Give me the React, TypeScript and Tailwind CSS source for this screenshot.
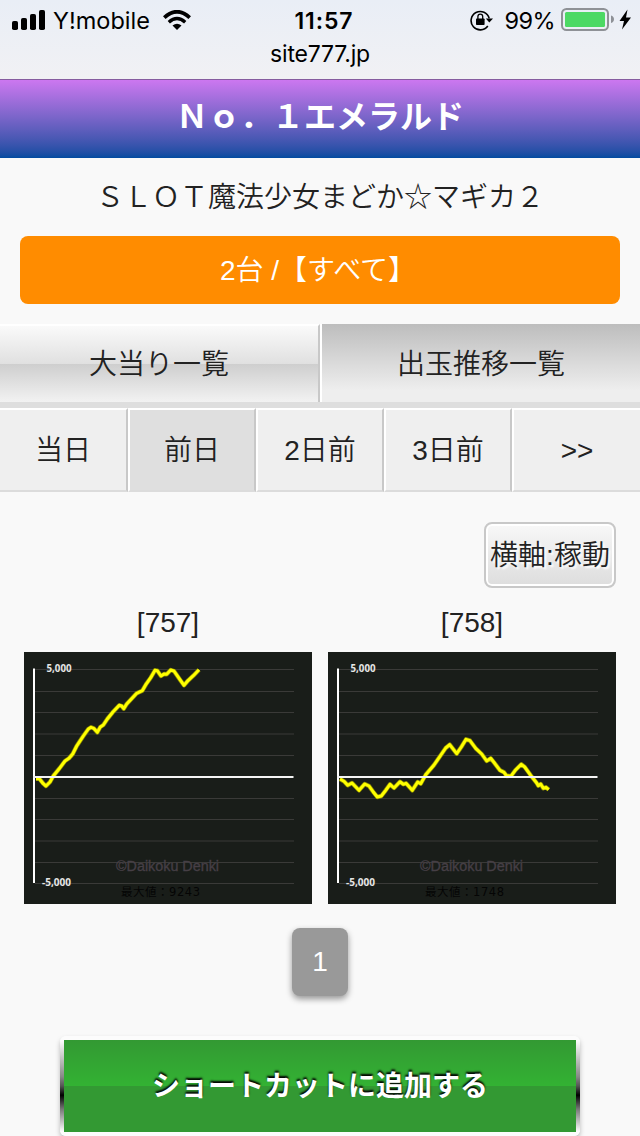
import React, { useState } from 'react';

const dayTabs = ['当日', '前日', '2日前', '3日前', '>>'];

const gridLines = [17.5, 39.5, 60.5, 82, 103.5, 146.5, 167.5, 189, 210.5, 231.5];

const machines = [
  {
    id: 757,
    max: 9243,
    points:
      '12,126.7 15.3,126.7 19.3,131.7 22,134 26,130 29.3,124 36,115.7 41,109 45,106.3 48.7,102 52.7,94 59.3,84 64.3,77 67,75.3 69.7,76.3 73.3,80.3 76.3,75 79.3,73 83.3,67 88.7,60.3 95.3,53.3 97.7,54 99.7,56.7 102.7,52 112.7,41.3 118.3,38.7 122,32.3 126.7,25.7 131,18.3 133.3,18.7 137,24 140,22 142.7,22.3 146.7,18 150,19 156,27.7 160,33.3 164.3,28.3 169.3,23.7 175,17.7',
  },
  {
    id: 758,
    max: 1748,
    points:
      '12,127 16,129.3 19.7,133.3 24,131 31,138.3 36.7,132 41,134 45.3,140 49.3,145 53.3,144 57.7,138.3 62,132.3 66,136 72,129.7 75.3,132.3 78,131.3 84.3,138.3 89.7,130 92.7,131.7 97.7,122.7 106,113 117.7,96 121.7,92.7 128.7,101.7 133.3,95 138,87.3 142,88.7 147.7,96.3 153.7,102 158.7,109 162.7,106.3 166.7,111.3 172,118.3 176,120.3 178.7,124 183.3,123.7 187.3,118.3 193.3,112.3 196.7,115 202.7,123.3 208.7,131 210.3,133.7 212.7,132 215.3,136.3 218,135.3 220.7,137.7',
  },
];

const StatusBar = () => (
  <header className="h-[79px] bg-linear-to-b from-[#e9eef6] to-[#f1f1f4] font-['Inter','Noto_Sans_CJK_JP',sans-serif] text-black">
    <div className="grid h-10 grid-cols-[1fr_auto_1fr] items-center pl-3 pr-2">
      <div className="flex items-center">
        <svg className="-mt-0.5" width="33" height="20" viewBox="0 0 33 20">
          <rect x="0" y="11" width="6" height="9" rx="1.8" />
          <rect x="9" y="8" width="6" height="12" rx="1.8" />
          <rect x="18" y="4" width="6" height="16" rx="1.8" />
          <rect x="27" y="0" width="6" height="20" rx="1.8" />
        </svg>
        <span className="ml-2 w-[97px] whitespace-nowrap text-[23.5px] leading-[42px]">Y!mobile</span>
        <svg className="-mt-0.5 ml-[13px]" width="28" height="20" viewBox="0 0 28 20">
          <path d="M1.3 7.6Q14-4 26.7 7.6" fill="none" stroke="#000" strokeWidth="3.8" />
          <path d="M5.8 12.2Q14 4.8 22.2 12.2" fill="none" stroke="#000" strokeWidth="3.4" />
          <path d="M14 20 9.5 15.4Q14 12 18.5 15.4Z" />
        </svg>
      </div>
      <span className="pl-1 text-[23px] font-semibold leading-[42px] tracking-[0.9px]">11:57</span>
      <div className="flex items-center justify-end">
        <svg className="-mt-0.5" width="23" height="22" viewBox="0 0 23 22">
          <path d="M17.8 17A9.2 9.2 0 1 1 19.2 9.4" fill="none" stroke="#000" strokeWidth="1.6" />
          <path d="M15.8 9.4H23L19.3 13.5Z" />
          <rect x="6" y="9.5" width="8.6" height="6.5" rx="0.8" />
          <path d="M7.9 10V7.6a2.4 2.4 0 0 1 4.8 0V10" fill="none" stroke="#000" strokeWidth="1.3" />
        </svg>
        <span className="ml-3 text-[23.5px] leading-[42px] tracking-[-0.6px]">99%</span>
        <svg className="-mt-1 ml-[6px]" width="71" height="24" viewBox="0 0 71 24">
          <rect x="1" y="2" width="46" height="21" rx="4.5" fill="none" stroke="#8e9196" strokeWidth="2" />
          <rect x="4" y="5" width="40" height="15" rx="1.5" fill="#4cd964" />
          <path d="M50 8.5c4 1 4 6.5 0 7.5Z" fill="#8e9196" />
          <path d="M66.500 2.500 58.500 14H63L61 22.500 70 10.500H65Z" />
        </svg>
      </div>
    </div>
    <p className="-mt-px text-center text-[23px] leading-[30px] tracking-[-0.2px]">site777.jp</p>
  </header>
);

const SlumpGraph = ({ max, points }: { max: number; points: string }) => (
  <svg className="block" width="288" height="252" viewBox="0 0 288 252">
    <rect width="288" height="252" fill="#191d19" />
    {gridLines.map(y => (
      <line key={y} x1="11" x2="270" y1={y} y2={y} stroke="#3a3a38" />
    ))}
    <g fill="#e6e6e6" fontSize="10.3" fontWeight="700" fontFamily="'Open Sans', sans-serif">
      <text x="22.5" y="20" textLength="25" lengthAdjust="spacingAndGlyphs">5,000</text>
      <text x="18" y="234" textLength="29" lengthAdjust="spacingAndGlyphs">-5,000</text>
    </g>
    <text x="92" y="219" fill="#463f46" stroke="#463f46" strokeWidth="0.3" fontSize="14" textLength="103" lengthAdjust="spacingAndGlyphs" fontFamily="'Liberation Sans', sans-serif">
      ©Daikoku Denki
    </text>
    <text x="97" y="243.5" fill="#050505" fontSize="11.5" textLength="79" fontFamily="'DejaVu Sans', 'Noto Sans CJK JP', sans-serif">
      最大値：{max}
    </text>
    <polyline points={points} fill="none" stroke="#8b8b00" strokeWidth="4.4" strokeLinejoin="round" />
    <polyline points={points} fill="none" stroke="#ffff00" strokeWidth="3" strokeLinejoin="round" />
    <line x1="10" x2="10" y1="16.5" y2="231" stroke="#fff" strokeWidth="2" />
    <line x1="9" x2="269.5" y1="125" y2="125" stroke="#f4f4f4" strokeWidth="2" />
  </svg>
);

const App = () => {
  const [day, setDay] = useState(1);

  return (
    <div className="h-[1136px] w-[640px] overflow-hidden bg-[#f9f9f9] font-['Liberation_Sans','Noto_Sans_CJK_JP',sans-serif] text-[28px] text-[#222]">
      <StatusBar />
      <h1 className="h-[79px] border-t border-[#865c9f] bg-linear-to-b from-[#cc77f0] to-[#004ba0] text-center font-['Noto_Sans_CJK_JP',sans-serif] text-[32px] font-bold leading-[68px] text-white">
        Ｎｏ．１エメラルド
      </h1>
      <h2 className="h-[78px] text-center font-['Noto_Sans_CJK_JP',sans-serif] font-[350] leading-[74px]">
        ＳＬＯＴ魔法少女まどか☆マギカ２
      </h2>
      <button className="mx-5 block h-[68px] w-[600px] rounded-lg bg-[#ff8c00] pr-1 pt-0.5 font-[350] text-white">
        2台 /【すべて】
      </button>

      {/* List type */}
      <nav className="mt-5 flex h-[84px] border-b-[6px] border-[#dedede] font-[350] [text-shadow:2px_2px_2px_#fff]">
        <button className="w-80 border-r-2 border-t-2 border-r-[#c8c8c8] border-t-white bg-[linear-gradient(#fafafa,#e0e0e0_50%,#cecece_50%,#f2f2f2)] pt-0.5">
          大当り一覧
        </button>
        <button className="flex-1 border-l-2 border-white bg-[linear-gradient(#bdbdbd,#eeeeee_85%)] pt-1 [text-shadow:none]">
          出玉推移一覧
        </button>
      </nav>

      {/* Days */}
      <nav className="grid h-[84px] grid-cols-5 font-[350] [text-shadow:2px_2px_2px_#fff]">
        {dayTabs.map((label, i) => (
          <button
            key={label}
            onClick={() => setDay(i)}
            className={`border-b-2 border-l-2 border-r-2 border-t-2 border-b-[#dcdcdc] border-l-white border-r-[#c8c8c8] border-t-white pt-px first:border-l-0 last:border-r-0 ${
              day === i ? 'bg-[#dfdfdf]' : 'bg-[#efefef]'
            }`}
          >
            {label}
          </button>
        ))}
      </nav>

      <div className="flex justify-end px-6 pt-[30px]">
        <button className="h-[66px] w-[132px] whitespace-nowrap rounded-lg border-2 border-[#c8c8c8] bg-linear-to-b from-[#f8f8f8] to-[#dddddd] pt-0.5 font-[350] shadow-[inset_0_0_0_2px_#fff] [text-shadow:2px_2px_2px_#fff]">
          横軸:稼動
        </button>
      </div>

      {/* Graphs */}
      <div className="flex gap-4 px-6">
        {machines.map(m => (
          <section key={m.id}>
            <h3 className="h-16 text-center leading-[70px]">[{m.id}]</h3>
            <SlumpGraph max={m.max} points={m.points} />
          </section>
        ))}
      </div>

      <div className="flex justify-center pt-6">
        <button className="h-[68px] w-14 rounded-lg bg-[#999] text-white shadow-[0_3px_6px_rgba(0,0,0,0.4)]">1</button>
      </div>

      <div className="mx-[60px] mt-10 rounded-md border-y-4 border-[#fcfcfc] bg-[linear-gradient(#fff,#888_40%,#555_50%,#000_60%,#777_75%,#fff)] px-1 shadow-[0_3px_5px_rgba(0,0,0,0.25)]">
        <button className="block h-[92px] w-full bg-[linear-gradient(#339933,#33b233_50%,#339933_50%)] pb-1 font-['Noto_Sans_CJK_JP',sans-serif] font-bold text-white [text-shadow:0_-2px_2px_#000]">
          ショートカットに追加する
        </button>
      </div>
    </div>
  );
};

export default App;
